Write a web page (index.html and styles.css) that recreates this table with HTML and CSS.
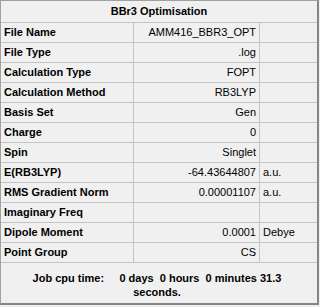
FILE: index.html
```html
<!DOCTYPE html>
<html lang="en">
<head>
    <meta charset="UTF-8">
    <meta name="viewport" content="width=device-width, initial-scale=1.0">
    <title>BBr3 Optimisation</title>
    <link rel="stylesheet" href="styles.css">
</head>
<body>
    <div class="panel">
        <div class="title">BBr3 Optimisation</div>
        <div class="grid">
            <div class="lbl">File Name</div><div class="val">AMM416_BBR3_OPT</div><div class="unit"></div>
            <div class="lbl">File Type</div><div class="val">.log</div><div class="unit"></div>
            <div class="lbl">Calculation Type</div><div class="val">FOPT</div><div class="unit"></div>
            <div class="lbl">Calculation Method</div><div class="val">RB3LYP</div><div class="unit"></div>
            <div class="lbl">Basis Set</div><div class="val">Gen</div><div class="unit"></div>
            <div class="lbl">Charge</div><div class="val">0</div><div class="unit"></div>
            <div class="lbl">Spin</div><div class="val">Singlet</div><div class="unit"></div>
            <div class="lbl">E(RB3LYP)</div><div class="val">-64.43644807</div><div class="unit">a.u.</div>
            <div class="lbl">RMS Gradient Norm</div><div class="val">0.00001107</div><div class="unit">a.u.</div>
            <div class="lbl">Imaginary Freq</div><div class="val"></div><div class="unit"></div>
            <div class="lbl">Dipole Moment</div><div class="val">0.0001</div><div class="unit">Debye</div>
            <div class="lbl">Point Group</div><div class="val">CS</div><div class="unit"></div>
        </div>
        <div class="footer">Job cpu time:     0 days  0 hours  0 minutes 31.3 seconds.</div>
    </div>
</body>
</html>
```

FILE: styles.css
```css
* {
    box-sizing: border-box;
    margin: 0;
    padding: 0;
}

body {
    background: #f0f0f0;
    font-family: "Liberation Sans", Arial, sans-serif;
    font-size: 11px;
    color: #000;
}

.panel {
    width: 319px;
    height: 305px;
    background: #f0f0f0;
    border-left: 1px solid #a0a0a0;
    border-top: 1px solid #a0a0a0;
    border-right: 2px solid #858585;
    border-bottom: 2px solid #858585;
    display: flex;
    flex-direction: column;
}

.title {
    height: 22px;
    line-height: 21px;
    text-align: center;
    font-weight: bold;
    border-bottom: 1px solid #c4c4c4;
}

.grid {
    display: grid;
    grid-template-columns: 133px 126px 57px;
    grid-auto-rows: 20px;
}

.grid > div {
    border-bottom: 1px solid #c4c4c4;
    line-height: 19px;
    white-space: nowrap;
    overflow: hidden;
}

.lbl {
    font-weight: bold;
    padding-left: 3px;
    border-right: 1px solid #c4c4c4;
}

.val {
    text-align: right;
    padding-right: 3px;
    border-right: 1px solid #c4c4c4;
}

.unit {
    padding-left: 3px;
}

.footer {
    flex: 1;
    padding: 8px 18px 0 14px;
    text-align: center;
    font-weight: bold;
    line-height: 14px;
    white-space: pre-wrap;
}
```
